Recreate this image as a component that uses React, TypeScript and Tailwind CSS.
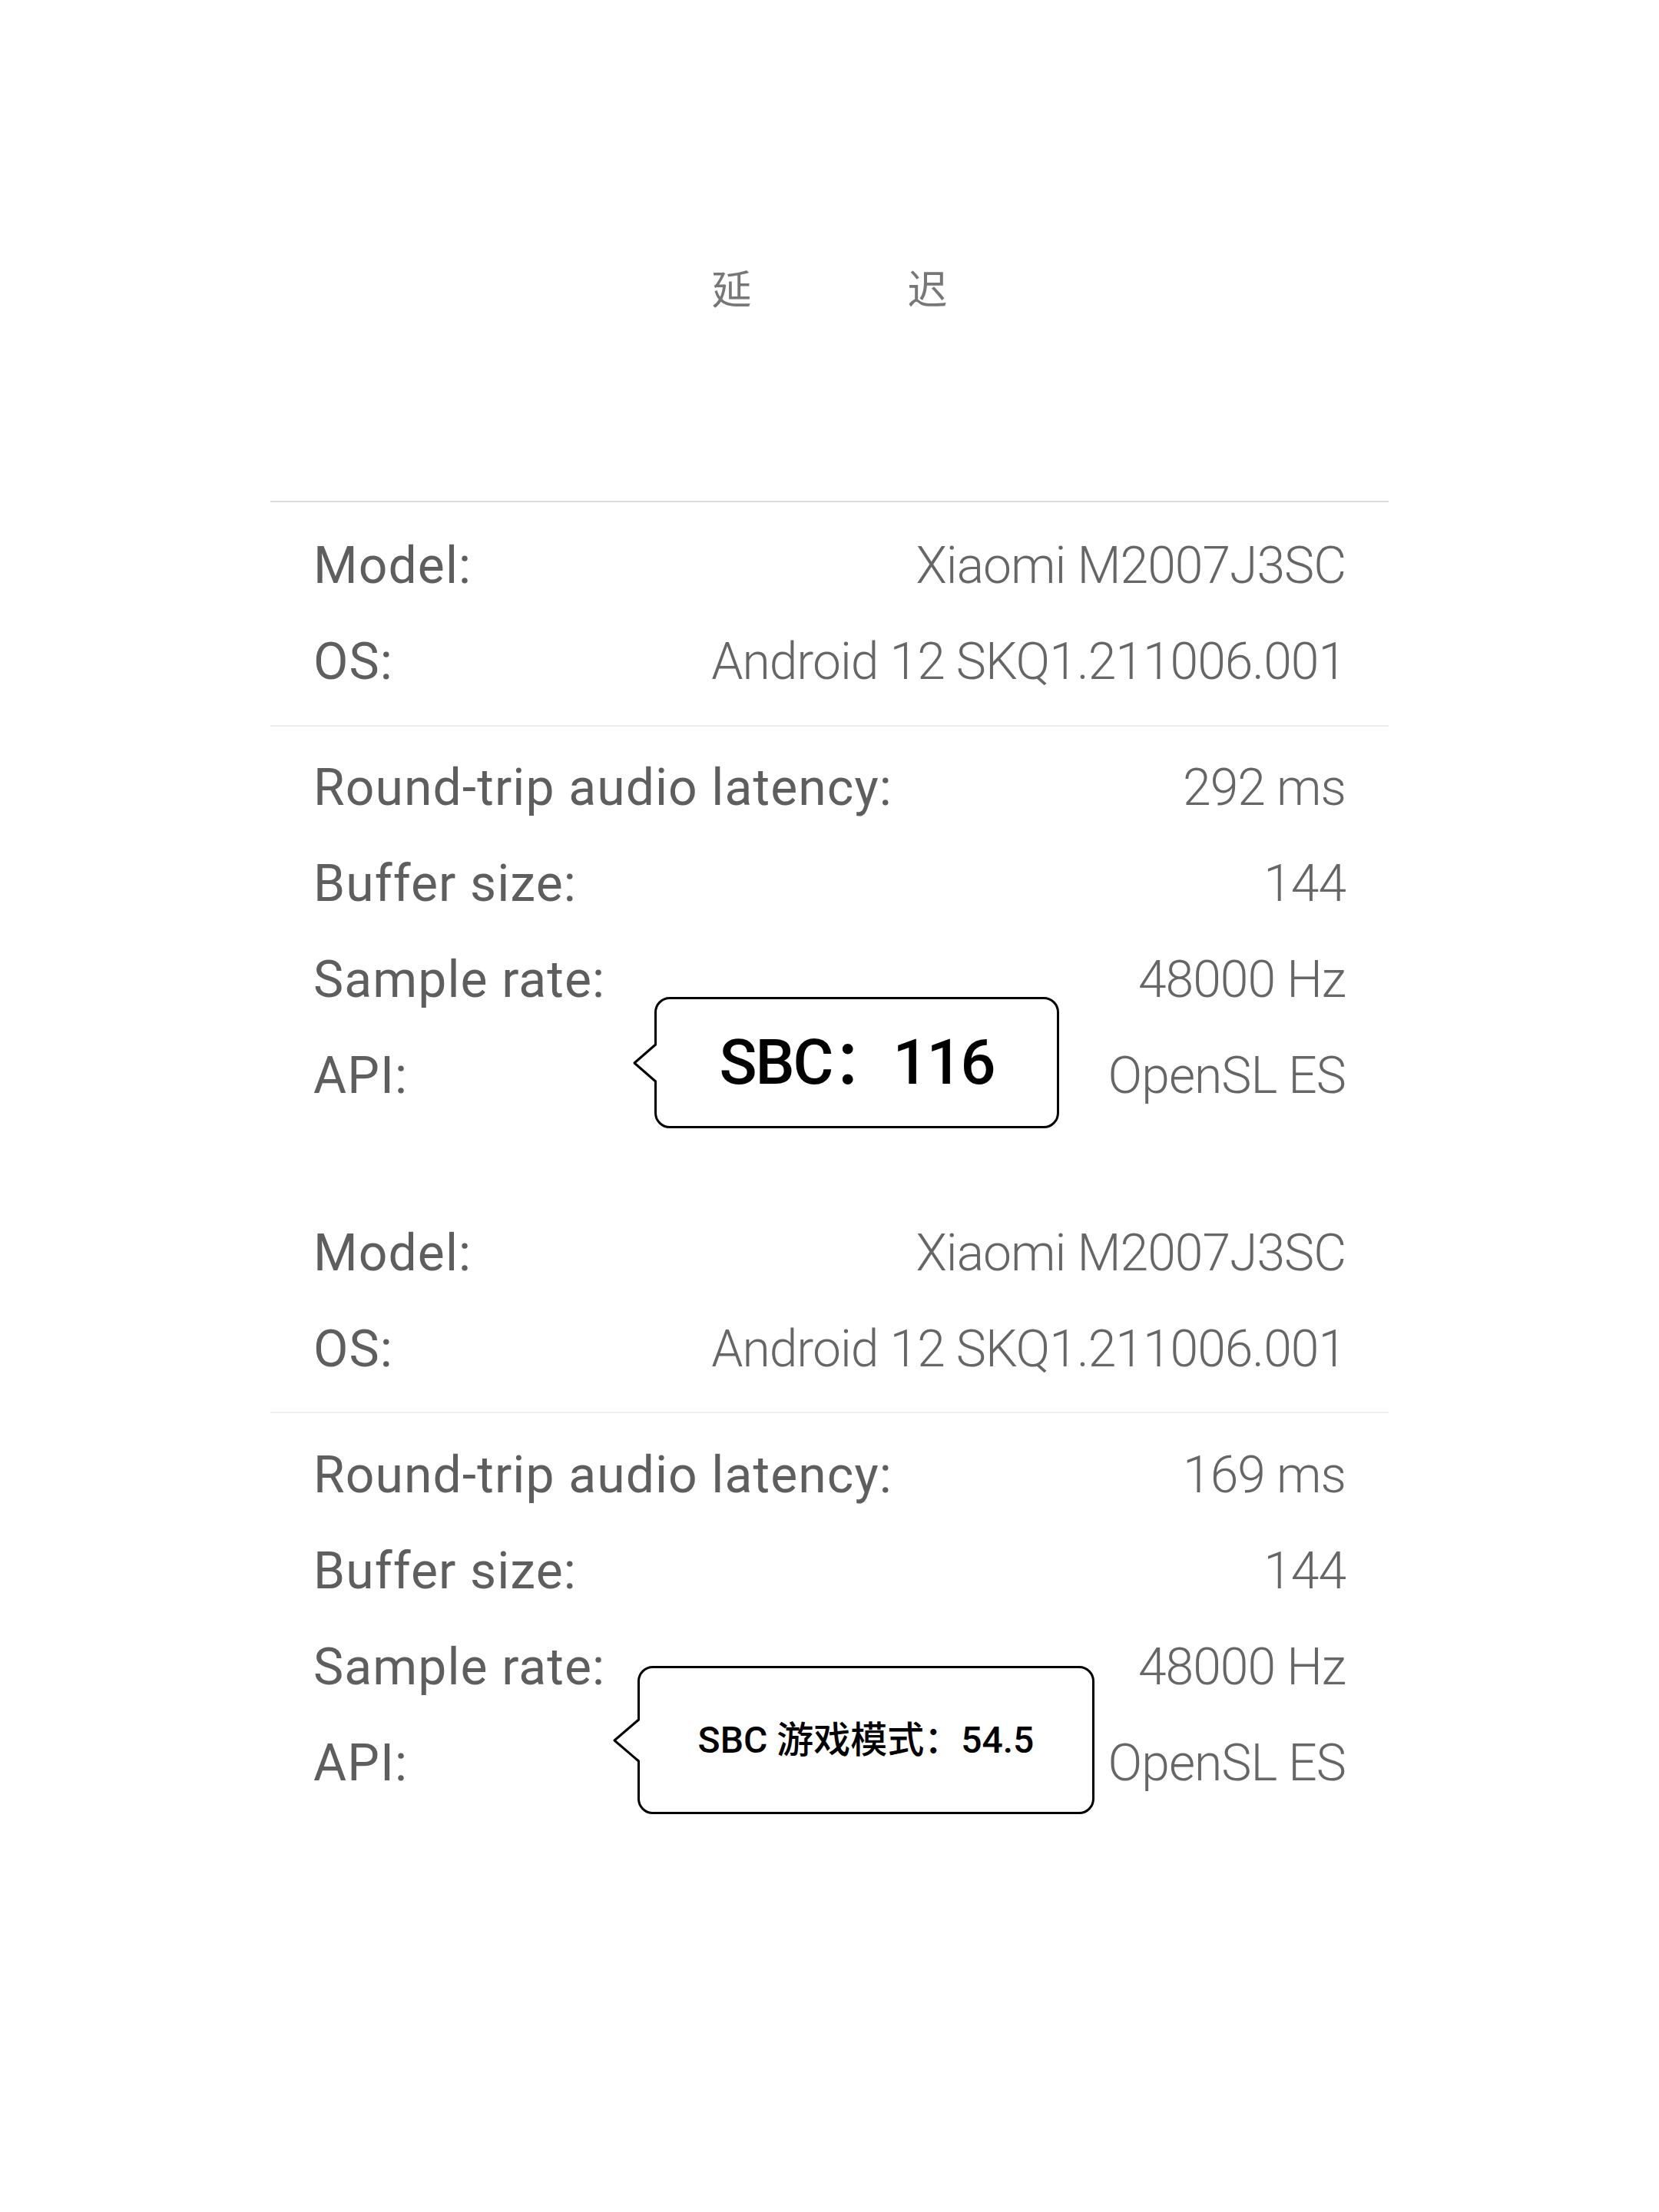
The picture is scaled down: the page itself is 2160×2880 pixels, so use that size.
import React from "react";

type Row = { label: string; value: string };

const DEVICE: Row[] = [
  { label: "Model:", value: "Xiaomi M2007J3SC" },
  { label: "OS:", value: "Android 12 SKQ1.211006.001" },
];

const latency = (ms: number): Row[] => [
  { label: "Round-trip audio latency:", value: `${ms} ms` },
  { label: "Buffer size:", value: "144" },
  { label: "Sample rate:", value: "48000 Hz" },
  { label: "API:", value: "OpenSL ES" },
];

const FONT = { fontFamily: 'Roboto, "Noto Sans CJK SC", sans-serif' };

export default function App() {
  return (
    <div className="w-[2160px] h-[2880px] bg-white" style={FONT}>
      {/* Title */}
      <div
        className="flex justify-center gap-[203px] pt-[348px] text-[52px] leading-none text-[#777777]"
        style={{ fontFamily: '"Noto Sans CJK SC", sans-serif' }}
      >
        <span>延</span>
        <span>迟</span>
      </div>

      <div className="mx-auto mt-[252px] w-[1456px]">
        {/* First run */}
        <div className="border-t-2 border-[#dcdcdc] pt-5 pb-5">
          <InfoRows rows={DEVICE} />
        </div>
        <div className="relative border-t-2 border-[#ececec] pt-[17px]">
          <InfoRows rows={latency(292)} />
          <Bubble className="left-[500px] top-[352px] w-[527px] h-[171px]" tail={29} tailHalf={24}>
            <span className="text-[81px] font-medium tracking-[-2px] text-black">SBC：116</span>
          </Bubble>
        </div>

        {/* Second run */}
        <div className="mt-[106px] pb-[19px]">
          <InfoRows rows={DEVICE} />
        </div>
        <div className="relative border-t-2 border-[#efefef] pt-[18px]">
          <InfoRows rows={latency(169)} />
          <Bubble className="left-[478px] top-[329px] w-[595px] h-[193px]" tail={33} tailHalf={27}>
            <span className="text-[48px] font-medium text-black">SBC 游戏模式：54.5</span>
          </Bubble>
        </div>
      </div>
    </div>
  );
}

function InfoRows({ rows }: { rows: Row[] }) {
  return (
    <div className="flex flex-col px-14">
      {rows.map((r) => (
        <div key={r.label} className="flex h-[125px] items-center justify-between text-[66px] leading-none">
          <span className="tracking-[1.1px] text-[#5e5e5e]">{r.label}</span>
          <span className="font-light tracking-[-1px] text-[#666666]">{r.value}</span>
        </div>
      ))}
    </div>
  );
}

// ─── Speech bubble with a left tail ──────────────────────────────────────────

function Bubble({
  className,
  tail,
  tailHalf,
  children,
}: {
  className: string;
  tail: number;
  tailHalf: number;
  children: React.ReactNode;
}) {
  return (
    <div
      className={`absolute flex items-center justify-center rounded-[20px] border-[3px] border-black bg-white ${className}`}
    >
      <svg
        width={tail + 4}
        height={tailHalf * 2 + 4}
        viewBox={`0 0 ${tail + 4} ${tailHalf * 2 + 4}`}
        className="absolute top-1/2 -translate-y-1/2"
        style={{ left: -(tail + 3) }}
      >
        <polygon
          points={`${tail + 4},2 3,${tailHalf + 2} ${tail + 4},${tailHalf * 2 + 2}`}
          fill="white"
        />
        <polyline
          points={`${tail + 1.5},2 3,${tailHalf + 2} ${tail + 1.5},${tailHalf * 2 + 2}`}
          fill="none"
          stroke="black"
          strokeWidth={3}
          strokeLinejoin="round"
        />
      </svg>
      {children}
    </div>
  );
}
